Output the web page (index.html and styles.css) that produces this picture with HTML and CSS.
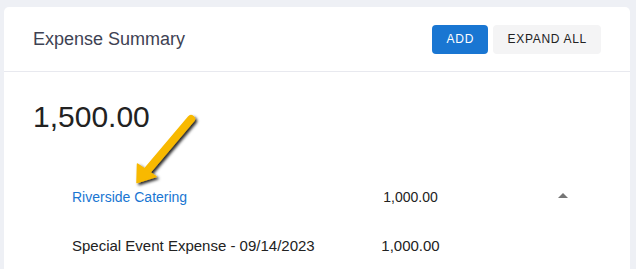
FILE: index.html
```html
<!DOCTYPE html>
<html lang="en">
  <head>
    <meta charset="UTF-8" />
    <meta name="viewport" content="width=device-width, initial-scale=1.0" />
    <title>Expense Summary</title>

    <link rel="stylesheet" href="styles.css">
  </head>
  <body>
    <div class="card">
      <div class="card-header">
        <h2>Expense Summary</h2>
        <div class="actions">
          <button class="btn primary">Add</button>
          <button class="btn">Expand All</button>
        </div>
      </div>

      <div class="total">1,500.00</div>

      <div class="rows">
        <div class="row">
          <a class="name link" href="#">Riverside Catering</a>
          <span class="amount">1,000.00</span>
          <span class="toggle"><span class="caret-up"></span></span>
        </div>
        <div class="row big">
          <span class="name">Special Event Expense - 09/14/2023</span>
          <span class="amount">1,000.00</span>
          <span class="toggle"></span>
        </div>
      </div>

      <!-- annotation arrow -->
      <svg class="pointer" width="80" height="90" viewBox="0 0 80 90">
        <defs>
          <filter id="shadow" x="-30%" y="-30%" width="160%" height="160%">
            <feDropShadow dx="2" dy="2" stdDeviation="1.4" flood-color="#000" flood-opacity="0.85" />
          </filter>
        </defs>
        <g filter="url(#shadow)" fill="#f8b900" stroke="#f8b900">
          <line x1="65" y1="13" x2="21" y2="65" stroke-width="8" stroke-linecap="round" />
          <polygon points="11,76.5 11.5,58 30,70.5" stroke-width="1.5" stroke-linejoin="round" />
        </g>
      </svg>
    </div>
  </body>
</html>
```

FILE: styles.css
```css
body {
  margin: 0;
  padding: 7px 6px 0 4px;
  background: #eef0f5;
  font-family: "Liberation Sans", Arial, sans-serif;
  height: 269px;
  box-sizing: border-box;
  overflow: hidden;
}

.card {
  position: relative;
  background: #ffffff;
  border-radius: 5px 5px 0 0;
  height: 100%;
}

.card-header {
  display: flex;
  align-items: center;
  justify-content: space-between;
  height: 64px;
  padding: 0 29px;
  border-bottom: 1px solid #e8e9ef;
}

h2 {
  margin: 0;
  font-size: 18px;
  font-weight: normal;
  color: #3e4253;
}

.actions {
  display: flex;
  gap: 5px;
}

.btn {
  height: 29px;
  padding: 0 14px 0 14.5px;
  border: none;
  border-radius: 4px;
  background: #f4f4f5;
  color: #222;
  font-family: inherit;
  font-size: 12px;
  letter-spacing: 0.7px;
  text-transform: uppercase;
}

.btn.primary {
  background: #1976d2;
  color: #ffffff;
}

.total {
  margin-top: 27px;
  padding-left: 29px;
  font-size: 30px;
  line-height: 36px;
  color: #222;
}

.rows {
  margin-top: 37px;
  padding-left: 68px;
}

.row {
  display: grid;
  grid-template-columns: 259px 159px 1fr;
  align-items: center;
  height: 49px;
  font-size: 14px;
  color: #222;
}

.row.big {
  font-size: 15px;
}

.link {
  color: #1976d2;
  text-decoration: none;
}

.amount {
  text-align: center;
}

.toggle {
  padding-left: 68px;
  display: flex;
  align-items: center;
  height: 10px;
}

.caret-up {
  width: 0;
  height: 0;
  border-left: 5.5px solid transparent;
  border-right: 5.5px solid transparent;
  border-bottom: 5.5px solid #757575;
  margin-top: -3px;
}

.pointer {
  position: absolute;
  left: 122px;
  top: 99px;
}
```
